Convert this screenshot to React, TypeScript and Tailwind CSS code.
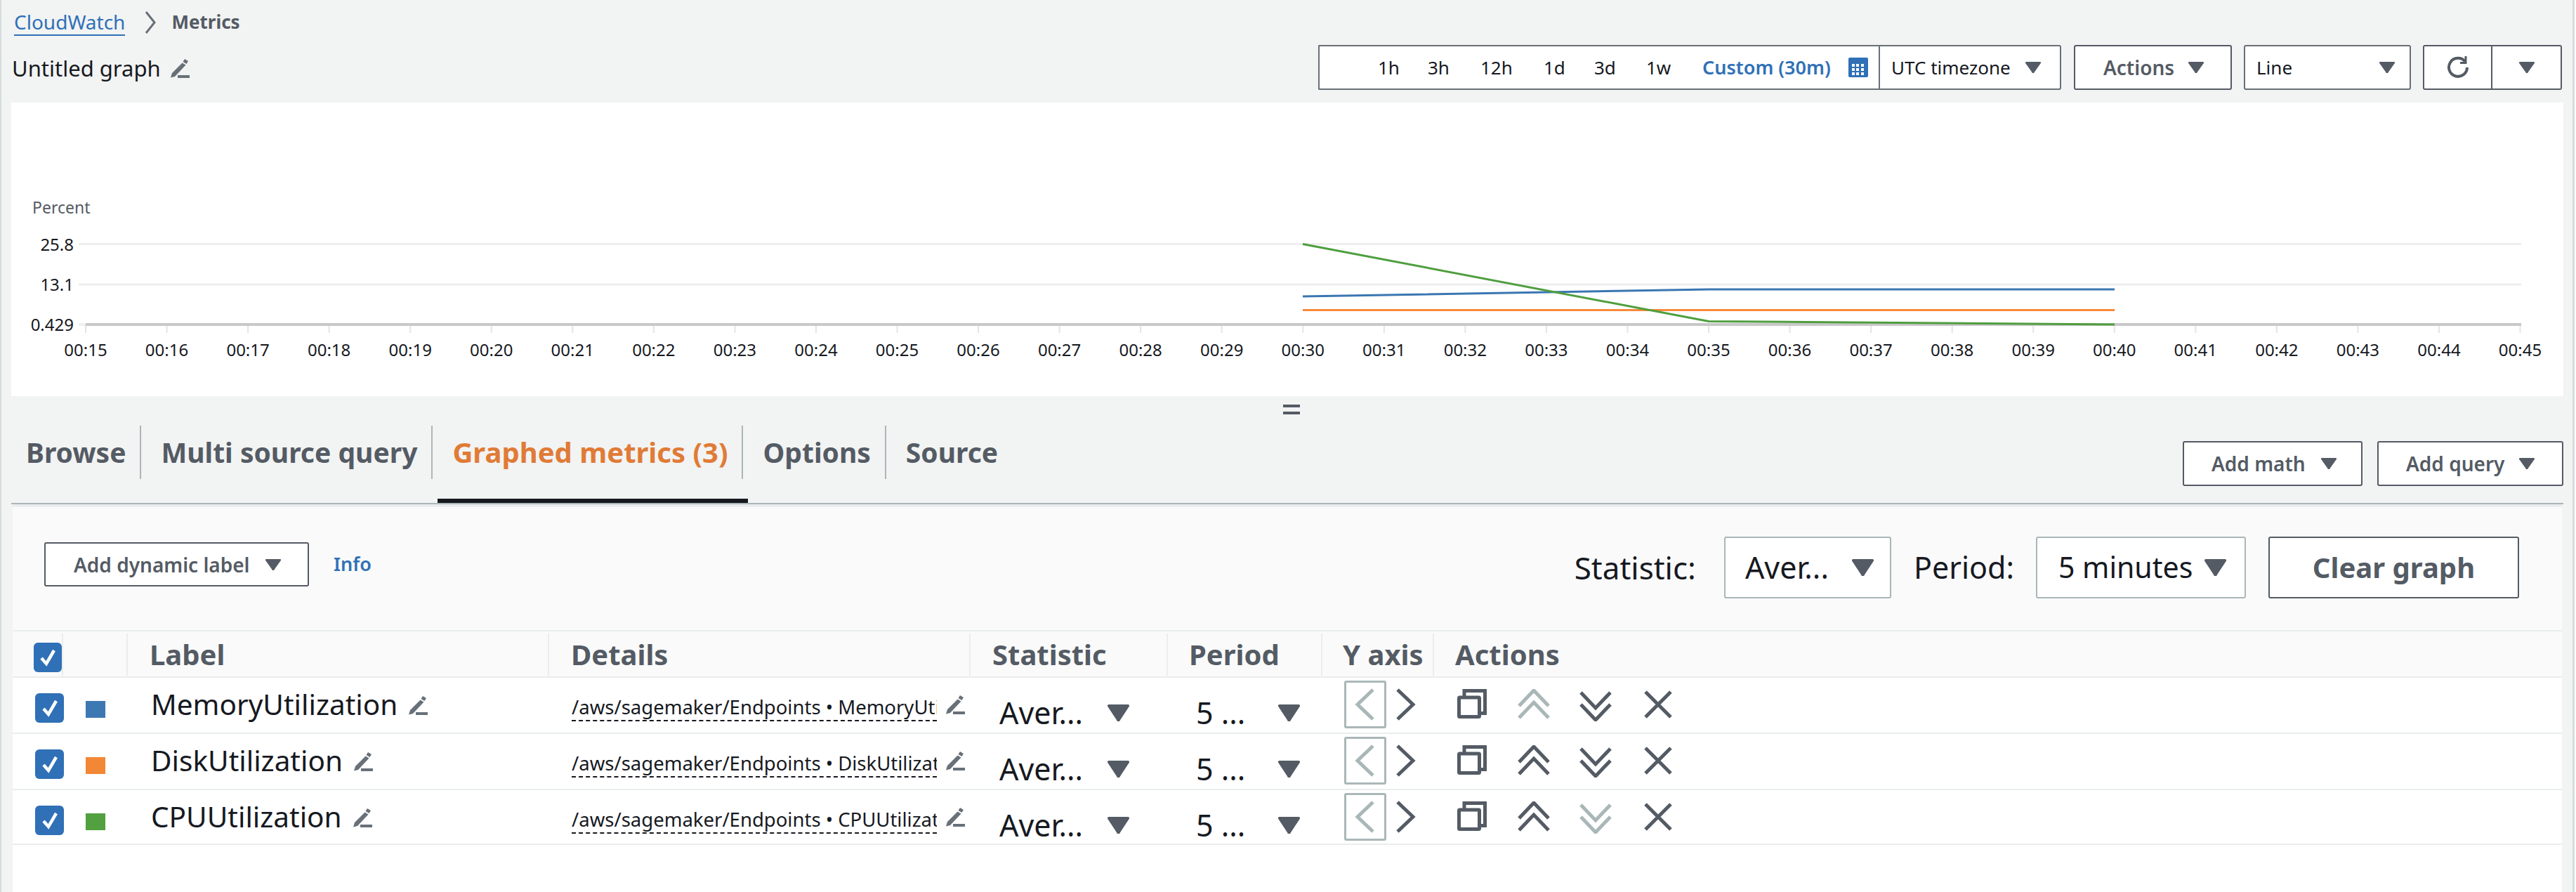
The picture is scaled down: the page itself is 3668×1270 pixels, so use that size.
import type { ReactNode } from "react";

const gray = "#545b64";
const disabled = "#aab7b8";

const hours = Array.from({ length: 31 }, (_, i) => i + 15);

function Caret({ big = false }: { big?: boolean }) {
  return (
    <svg className={big ? "h-6 w-[31px] shrink-0" : "h-4 w-[22px] shrink-0"} viewBox="0 0 31 24" preserveAspectRatio="none">
      <path d="M2 0h27a2 2 0 0 1 2 2.6L17.500 23a2 2 0 0 1-4 0L0 2.600A2 2 0 0 1 2 0z" fill={gray} />
    </svg>
  );
}

function Pencil() {
  return (
    <svg className="h-7 w-7 shrink-0" viewBox="0 0 28 28">
      <path d="M21 1l5 3-2.500 4-5-3zM17.500 6.500l5 3L7 26l-6 1.500L3 21z" fill="#687078" />
      <rect x="11" y="24" width="17" height="4" fill="#687078" />
    </svg>
  );
}

function Check({ className }: { className: string }) {
  return (
    <div className={`flex items-center justify-center rounded-md bg-[#2f70b7] ${className}`}>
      <svg className="h-[26px] w-[26px]" viewBox="0 0 26 26">
        <path d="M4 14l7 8L22 3" fill="none" stroke="#ffffff" strokeWidth="4.500" />
      </svg>
    </div>
  );
}

function Btn({ children, className = "" }: { children: ReactNode; className?: string }) {
  return (
    <div className={`flex items-center rounded-[3px] border-2 border-[#545b64] bg-white text-[28px] font-semibold whitespace-nowrap text-[#545b64] ${className}`}>
      {children}
    </div>
  );
}

function Chart() {
  return (
    <svg className="block h-[418px] w-full" viewBox="16 146 3634 418">
      <text x="46" y="304" fontSize="23" fill="#545b64">Percent</text>
      {[
        ["25.8", 347.5],
        ["13.1", 405],
        ["0.429", 462],
      ].map(([t, y]) => (
        <g key={t}>
          <line x1="112" x2="3590" y1={y} y2={y} stroke="#eeeeee" strokeWidth="3" />
          <text x="105" y={Number(y) + 9} fontSize="24" textAnchor="end" fill="#16191f">{t}</text>
        </g>
      ))}
      {hours.map((m, i) => {
        const x = 122 + i * 115.55;
        return (
          <g key={m}>
            <line x1={x} x2={x} y1="462" y2="474" stroke="#e4e4e4" strokeWidth="2" />
            <text x={x} y="507" fontSize="24" textAnchor="middle" fill="#16191f">00:{m}</text>
          </g>
        );
      })}
      <line x1="122" x2="3590" y1="462" y2="462" stroke="#c8c8c8" strokeWidth="4" />
      <polyline points="1855,422 2433,412 3011,412" fill="none" stroke="#3a76b2" strokeWidth="3" />
      <line x1="1855" x2="3011" y1="441.500" y2="441.500" stroke="#f68a3c" strokeWidth="3" />
      <polyline points="1855,347.500 2433,457.500 3011,462" fill="none" stroke="#4f9e3f" strokeWidth="3" />
    </svg>
  );
}

function Toolbar() {
  return (
    <div className="flex items-center text-[26px] text-[#16191f]">
      <div className="flex h-16 w-[798px] items-center rounded-l-[2px] border-2 border-r-0 border-[#687078] bg-white pl-[83px]">
        <span className="w-[71px]">1h</span>
        <span className="w-[75px]">3h</span>
        <span className="w-[90px]">12h</span>
        <span className="w-[72px]">1d</span>
        <span className="w-[74px]">3d</span>
        <span className="w-[80px]">1w</span>
        <span className="w-[208px] whitespace-nowrap text-[27px] font-semibold text-[#2f70b7]">Custom (30m)</span>
        <svg className="h-7 w-7 shrink-0" viewBox="0 0 28 28">
          <rect width="28" height="28" rx="2" fill="#2f70b7" />
          {[9, 15, 21].map((y) =>
            [5, 11, 18].map((x) => <rect key={`${x}-${y}`} x={x} y={y} width="4" height="4" fill="#ffffff" />),
          )}
        </svg>
      </div>
      <div className="flex h-16 w-[260px] items-center gap-[21px] rounded-r-[3px] border-2 border-[#687078] bg-white pl-[16px]">
        UTC timezone
        <Caret />
      </div>
      <Btn className="ml-[18px] h-16 w-[225px] gap-5 pl-10">
        Actions
        <Caret />
      </Btn>
      <div className="ml-[17px] flex h-16 w-[238px] items-center justify-between rounded-[3px] border-2 border-[#687078] bg-white pr-[21px] pl-4">
        Line
        <Caret />
      </div>
      <Btn className="ml-[17px] h-16 w-[99px] justify-center rounded-r-none">
        <svg className="h-8 w-8" viewBox="0 0 32 32" fill="none" stroke="#545b64" strokeWidth="4">
          <path d="M26 7.500A13 13 0 1 0 29 16" />
          <path d="M27 0v9.500h-8" strokeWidth="3" />
        </svg>
      </Btn>
      <Btn className="h-16 w-[99px] justify-center rounded-l-none border-l-0">
        <Caret />
      </Btn>
    </div>
  );
}

function Tabs() {
  const tabs = ["Browse", "Multi source query", "Graphed metrics (3)", "Options", "Source"];
  return (
    <div className="flex h-[154px] items-end justify-between border-b-2 border-[#aab7b8]">
      <div className="flex h-[110px] text-[39px] font-bold text-[#545b64]">
        {tabs.map((t, i) => (
          <div key={t} className={`flex h-[110px] items-start pr-[7px] pl-1 ${i === 2 ? "border-b-[6px] border-[#16191f]" : ""}`}>
            <span className={`flex h-[76px] items-center whitespace-nowrap pr-[20px] pl-[17px] ${i === 2 ? "text-[40px] text-[#e07b36]" : ""} ${i < 4 ? "border-r-2 border-[#aab7b8]" : ""}`}>
              {t}
            </span>
          </div>
        ))}
      </div>
      <div className="mb-[24px] flex gap-[21px]">
        <Btn className="h-16 w-[256px] gap-[22px] pl-[39px]">
          Add math
          <Caret />
        </Btn>
        <Btn className="h-16 w-[265px] gap-[21px] pl-[39px]">
          Add query
          <Caret />
        </Btn>
      </div>
    </div>
  );
}

function SelectBox({ text, className }: { text: string; className: string }) {
  return (
    <div className={`flex h-[88px] items-center justify-between rounded-[3px] border-2 border-[#aab7b8] bg-white whitespace-nowrap text-[#16191f] ${className}`}>
      {text}
      <Caret big />
    </div>
  );
}

function ControlRow() {
  return (
    <div className="flex h-[175px] items-start justify-between pt-[42px] pr-[61px] pl-[45px]">
      <div className="mt-2 flex items-center">
        <Btn className="h-[63px] w-[377px] gap-[22px] pl-[40px]">
          Add dynamic label
          <Caret />
        </Btn>
        <span className="ml-[35px] text-[27px] font-semibold text-[#2f70b7]">Info</span>
      </div>
      <div className="flex items-center text-[#16191f]">
        <span className="text-[44px]">Statistic:</span>
        <SelectBox text="Aver..." className="mr-8 ml-10 w-[238px] pr-[23px] pl-[28px] text-[43px]" />
        <span className="text-[43px]">Period:</span>
        <SelectBox text="5 minutes" className="ml-[31px] w-[299px] pr-[26px] pl-[30px] text-[41px]" />
        <div className="ml-8 flex h-[88px] w-[357px] items-center justify-center rounded-[3px] border-2 border-[#545b64] bg-white text-[40px] font-bold text-[#545b64]">
          Clear graph
        </div>
      </div>
    </div>
  );
}

const gridCols = "grid grid-cols-[72px_92px_600px_600px_281px_220px_159px_1fr]";

function HeaderRow() {
  const cols = ["", "", "Label", "Details", "Statistic", "Period", "Y axis", "Actions"];
  const pads = ["pl-[30px]", "", "pl-[31px]", "pl-[31px]", "pl-[31px]", "pl-[30px]", "pl-[29px]", "pl-[30px]"];
  return (
    <div className={`${gridCols} h-[68px] border-y-2 border-[#eaeded] py-1 text-[40px] font-bold text-[#545b64]`}>
      {cols.map((c, i) => (
        <div key={i} className={`flex -translate-y-[1px] items-center whitespace-nowrap ${pads[i]} ${i < 7 ? "border-r-2 border-[#eaeded]" : ""}`}>
          {i === 0 ? <Check className="h-[42px] w-[40px] translate-y-1" /> : c}
        </div>
      ))}
    </div>
  );
}

function Chevron({ d, box = "0 0 46 46", color = gray, className = "" }: { d: string; box?: string; color?: string; className?: string }) {
  return (
    <svg className={`shrink-0 ${className}`} viewBox={box} fill="none" stroke={color} strokeWidth="5">
      <path d={d} />
    </svg>
  );
}

const rows = [
  { name: "MemoryUtilization", color: "bg-[#3d78b2]", up: false, down: true },
  { name: "DiskUtilization", color: "bg-[#f28735]", up: true, down: true },
  { name: "CPUUtilization", color: "bg-[#52a03f]", up: true, down: false },
];

function MetricRow({ name, color, up, down, last }: { name: string; color: string; up: boolean; down: boolean; last: boolean }) {
  return (
    <div className={`${gridCols} border-b-2 border-[#eaeded] ${last ? "h-[78px]" : "h-20"}`}>
      <div className="pt-[22px] pl-[32px]">
        <Check className="h-[42px] w-[41px]" />
      </div>
      <div className="pt-[33px] pl-[32px]">
        <div className={`h-6 w-7 ${color}`} />
      </div>
      <div className="-mt-[1px] flex items-start gap-[15px] pl-[33px] text-[40.500px] leading-[82px] text-[#16191f]">
        <span className="-mt-[2px]">{name}</span>
        <div className="mt-[26px]">
          <Pencil />
        </div>
      </div>
      <div className="flex items-start gap-3 pl-[32px]">
        <div className="mt-6 w-[520px] overflow-hidden whitespace-nowrap border-b-2 border-dashed border-[#16191f] text-[27.500px] leading-[36px] text-[#16191f]">
          /aws/sagemaker/Endpoints • {name}
        </div>
        <div className="mt-6">
          <Pencil />
        </div>
      </div>
      <div className="flex items-start justify-between pt-[38px] pr-[55px] pl-[41px] text-[43px] leading-[28px] text-[#16191f]">
        <span className="-mt-[2px]">Aver...</span>
        <Caret big />
      </div>
      <div className="flex items-start justify-between pt-[38px] pr-[32px] pl-[40px] text-[43px] leading-[28px] text-[#16191f]">
        <span className="-mt-[2px]">5 ...</span>
        <Caret big />
      </div>
      <div className="flex items-start gap-3 pt-1 pl-[31px]">
        <div className="flex h-[68px] w-[60px] items-center justify-center rounded-[3px] border-[3px] border-[#aab7b8]">
          <Chevron d="M26 2L4 23l22 21" box="0 0 30 46" color={disabled} className="h-[46px] w-[30px]" />
        </div>
        <Chevron d="M4 2l22 21L4 44" box="0 0 30 46" className="mt-[11px] h-[46px] w-[30px]" />
      </div>
      <div className="flex items-start pt-4 pl-[33px]">
        <svg className="h-[42px] w-[42px] shrink-0" viewBox="0 0 42 42" fill="none" stroke={gray} strokeWidth="5">
          <path d="M10 10V2.500h29.500v32H32" />
          <rect x="2.500" y="12" width="29" height="27.500" rx="1" />
        </svg>
        <Chevron d="M2 24L23 2l21 22M2 41l21-22 21 22" color={up ? gray : disabled} className="ml-[44px] h-[46px] w-[46px]" />
        <Chevron d="M2 5l21 22L44 5M2 22l21 22L44 22" color={down ? gray : disabled} className="ml-[42px] h-[46px] w-[46px]" />
        <svg className="mt-[1px] ml-[45px] h-[42px] w-[42px] shrink-0" viewBox="0 0 42 42" fill="none" stroke={gray} strokeWidth="5">
          <path d="M3 3l36 36M39 3L3 39" />
        </svg>
      </div>
    </div>
  );
}

export default function App() {
  return (
    <div className="h-[1270px] w-[3668px] overflow-hidden bg-white">
      <div className="relative h-full w-[3666px] border-x-2 border-r-[3px] border-[#d5dbdb] bg-[#f2f3f3] font-['Noto_Sans',sans-serif]">
        <div className="flex h-[64px] items-center pb-[1px] pl-[18px]">
          <a className="border-b-2 border-[#2f70b7] text-[28px] leading-[36px] text-[#2f70b7]">CloudWatch</a>
          <svg className="ml-[26px] h-8 w-5 shrink-0" viewBox="0 0 20 32" fill="none" stroke="#687078" strokeWidth="3">
            <path d="M4 1l12 15L4 31" />
          </svg>
          <span className="ml-[20px] text-[26px] font-bold text-[#545b64]">Metrics</span>
        </div>
        <div className="flex h-16 items-center justify-between pr-[15px] pl-[15px]">
          <div className="flex translate-y-[1px] items-center gap-[13px] text-[31px] text-[#16191f]">
            Untitled graph
            <Pencil />
          </div>
          <Toolbar />
        </div>
        <div className="mt-[18px] mr-[13px] ml-[14px] bg-white">
          <Chart />
        </div>
        <div className="mr-[13px] ml-[14px]">
          <Tabs />
        </div>
        <div className="absolute top-[576px] left-[1825px] flex h-[14px] w-6 flex-col justify-between">
          <div className="h-1 bg-[#545b64]" />
          <div className="h-1 bg-[#545b64]" />
        </div>
        <div className="mr-[15px] ml-[16px] border-t-4 border-[#eaeded] bg-[#fafafa]">
          <ControlRow />
        </div>
        <div className="mr-[15px] ml-[16px] h-[400px] bg-white">
          <div className="bg-[#fafafa]">
            <HeaderRow />
          </div>
          {rows.map((r, i) => (
            <MetricRow key={r.name} {...r} last={i === rows.length - 1} />
          ))}
        </div>
      </div>
    </div>
  );
}
